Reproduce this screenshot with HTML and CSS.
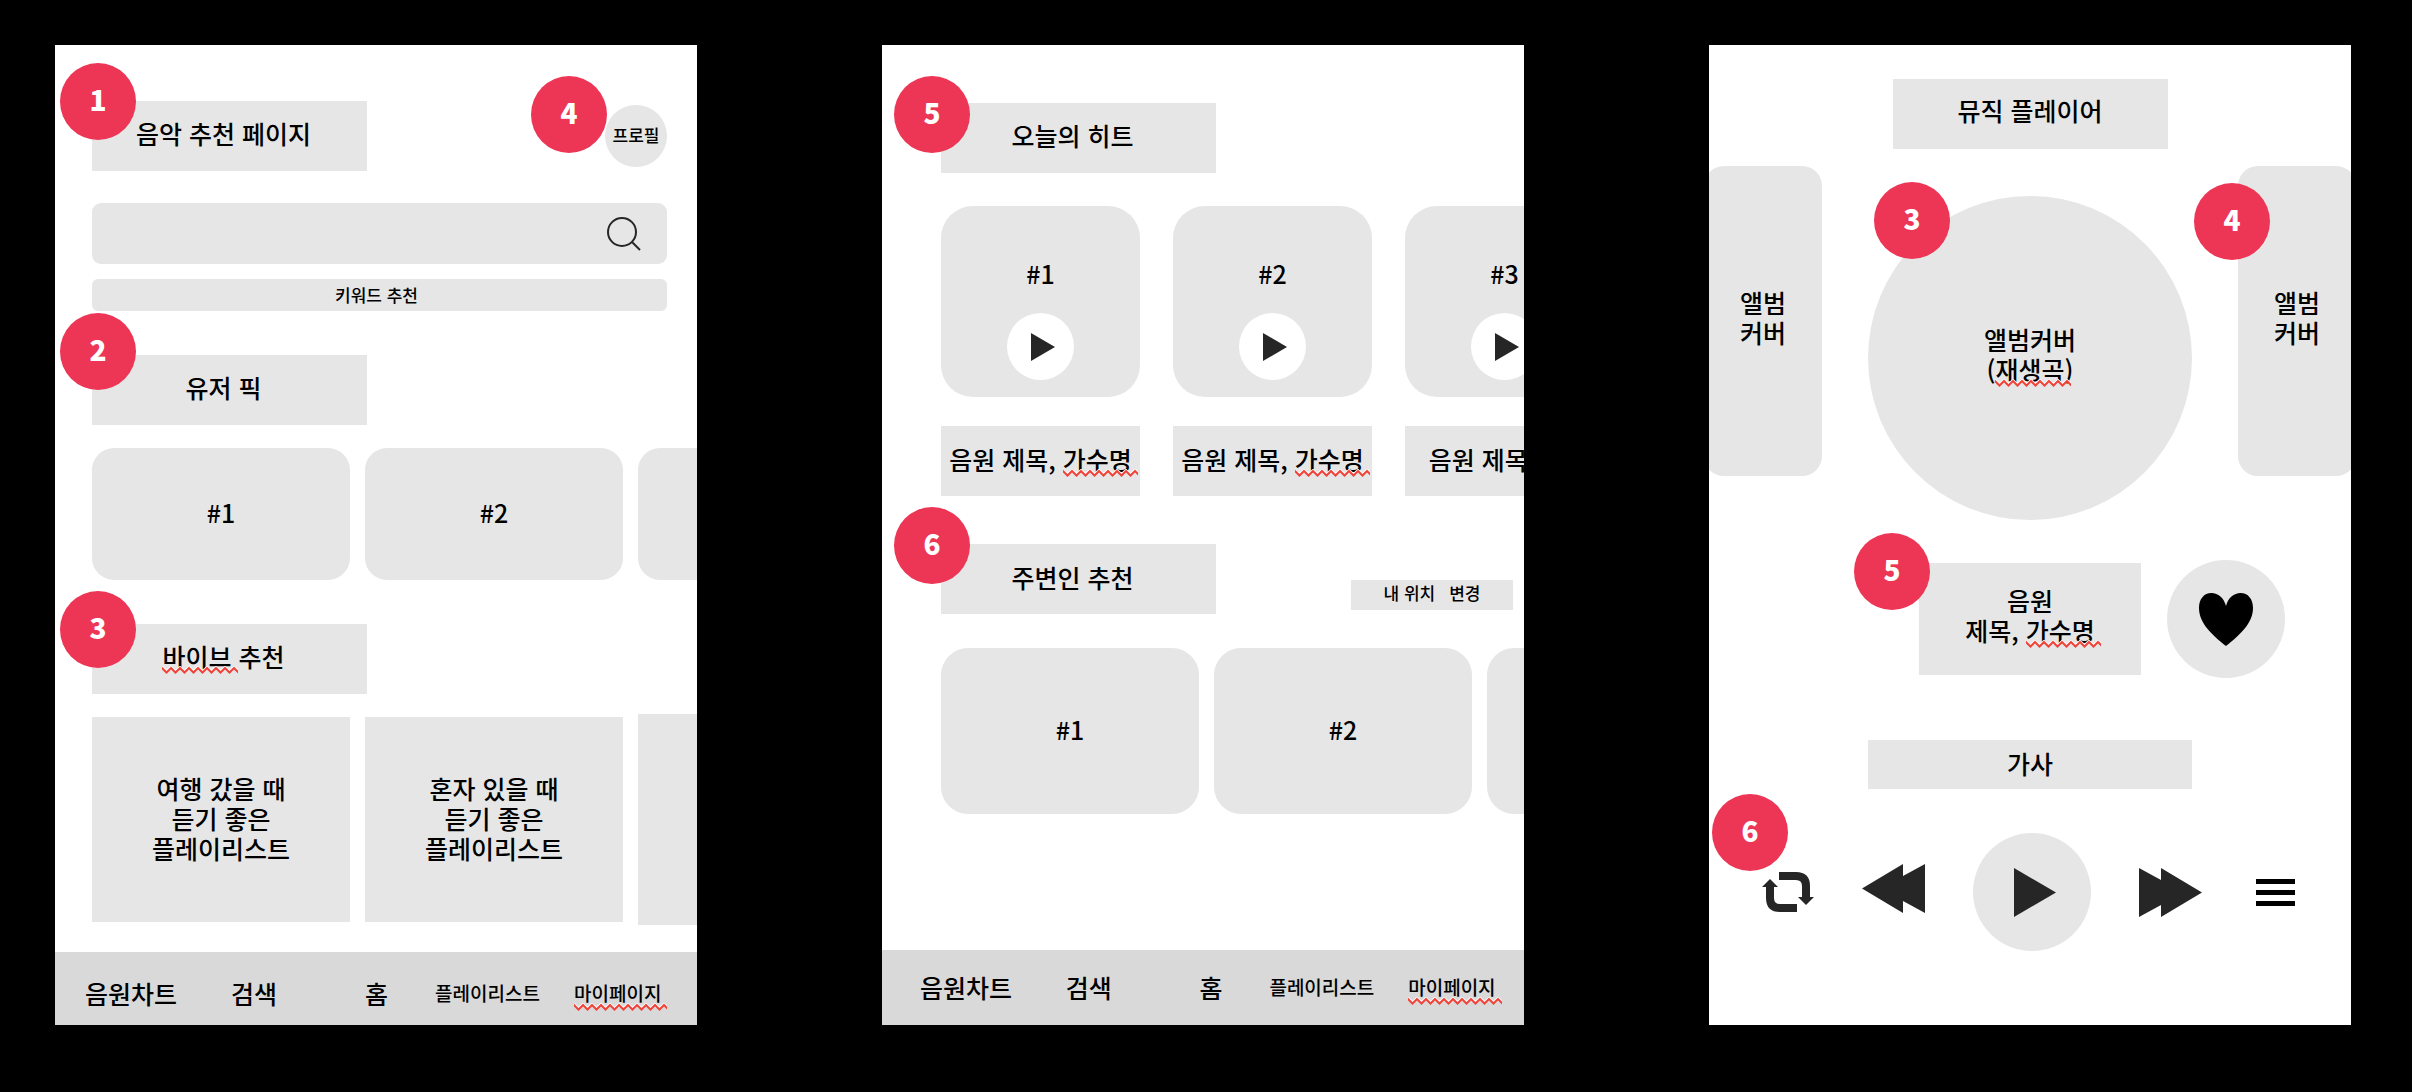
FILE: index.html
```html
<!DOCTYPE html>
<html lang="ko">
<head>
<meta charset="utf-8">
<meta name="viewport" content="width=device-width, initial-scale=1">
<title>음악 추천 와이어프레임</title>
<link rel="stylesheet" href="styles.css">
</head>
<body>
<main class="board">

  <section class="phone phone--recommend">
    <header class="head">
      <h1 class="tag tag--section">음악 추천 페이지<span class="badge badge--title">1</span></h1>
      <div class="profile-wrap">
        <button class="profile" type="button">프로필</button>
        <span class="badge badge--profile">4</span>
      </div>
    </header>

    <form class="search">
      <input class="search__input" type="search" aria-label="검색어">
      <button class="search__button" type="button" aria-label="검색">
        <svg width="34" height="34" viewBox="0 0 34 34" fill="none" stroke="#262626" stroke-width="2"><circle cx="15" cy="15" r="14"/><path d="M25 25l8 8"/></svg>
      </button>
    </form>
    <button class="keyword" type="button">키워드 추천</button>

    <h2 class="tag tag--section">유저 픽<span class="badge badge--pick">2</span></h2>
    <div class="row row--pick">
      <article class="card">#1</article>
      <article class="card">#2</article>
      <article class="card"></article>
    </div>

    <h2 class="tag tag--section"><span><span class="typo">바이브</span> 추천</span><span class="badge badge--vibe">3</span></h2>
    <div class="row row--vibe">
      <article class="card">여행 갔을 때<br>듣기 좋은<br>플레이리스트</article>
      <article class="card">혼자 있을 때<br>듣기 좋은<br>플레이리스트</article>
      <article class="card card--next"></article>
    </div>

    <nav class="tabs tabs--recommend">
      <a href="#chart">음원차트</a>
      <a href="#search">검색</a>
      <a href="#home">홈</a>
      <a class="tabs__small" href="#playlist">플레이리스트</a>
      <a class="tabs__small" href="#mypage"><span class="typo">마이페이지</span></a>
    </nav>
  </section>

  <section class="phone phone--hits">
    <h2 class="tag tag--section">오늘의 히트<span class="badge badge--hits">5</span></h2>
    <div class="songs">
      <article class="song">
        <div class="song__cover">#1
          <button class="song__play" type="button" aria-label="재생"><svg width="24" height="28" viewBox="0 0 24 28" fill="#262626"><path d="M0 0l24 14L0 28z"/></svg></button>
        </div>
        <p class="tag">음원 제목,&nbsp;<span class="typo">가수명</span></p>
      </article>
      <article class="song">
        <div class="song__cover">#2
          <button class="song__play" type="button" aria-label="재생"><svg width="24" height="28" viewBox="0 0 24 28" fill="#262626"><path d="M0 0l24 14L0 28z"/></svg></button>
        </div>
        <p class="tag">음원 제목,&nbsp;<span class="typo">가수명</span></p>
      </article>
      <article class="song song--next">
        <div class="song__cover">#3
          <button class="song__play" type="button" aria-label="재생"><svg width="24" height="28" viewBox="0 0 24 28" fill="#262626"><path d="M0 0l24 14L0 28z"/></svg></button>
        </div>
        <p class="tag">음원 제목,&nbsp;<span class="typo">가수명</span></p>
      </article>
    </div>

    <div class="nearby">
      <h2 class="tag tag--section">주변인 추천<span class="badge badge--nearby">6</span></h2>
      <div class="location"><span>내 위치</span><button type="button">변경</button></div>
    </div>
    <div class="row row--nearby">
      <article class="card">#1</article>
      <article class="card">#2</article>
      <article class="card"></article>
    </div>

    <nav class="tabs tabs--hits">
      <a href="#chart">음원차트</a>
      <a href="#search">검색</a>
      <a href="#home">홈</a>
      <a class="tabs__small" href="#playlist">플레이리스트</a>
      <a class="tabs__small" href="#mypage"><span class="typo">마이페이지</span></a>
    </nav>
  </section>

  <section class="phone phone--player">
    <h2 class="tag tag--player">뮤직 플레이어</h2>

    <div class="carousel">
      <div class="album">앨범<br>커버</div>
      <div class="album album--current"><span>앨범커버<br>(<span class="typo">재생곡</span>)</span><span class="badge badge--current">3</span></div>
      <div class="album">앨범<br>커버<span class="badge badge--album">4</span></div>
    </div>

    <div class="now">
      <div class="now__title"><span>음원<br>제목, <span class="typo">가수명</span></span><span class="badge badge--now">5</span></div>
      <button class="disc" type="button" aria-label="좋아요">
        <svg width="54" height="53" viewBox="0 0 54 53"><path d="M27 13C25 5 19 0 12.500 0 5 0 0 6 0 15 0 30 13 42 27 53 41 42 54 30 54 15 54 6 49 0 41.500 0 35 0 29 5 27 13z"/></svg>
      </button>
    </div>

    <button class="lyrics" type="button">가사</button>

    <div class="controls">
      <span class="badge badge--controls">6</span>
      <button type="button" aria-label="반복">
        <svg width="52" height="40" viewBox="0 0 52 40" fill="#262626"><path d="M17 0h17q14 0 14 14v11h4l-8 8-8-8h4V14q0-6-6-6H17z"/><path d="M35 40H18Q4 40 4 26V15H0l8-8 8 8h-4v11q0 6 6 6h17z"/></svg>
      </button>
      <button type="button" aria-label="이전 곡">
        <svg width="63" height="57" viewBox="0 0 63 57" fill="#262626"><path d="M41 0L0 24.500 41 49V37l22 12V0L41 12z"/></svg>
      </button>
      <button class="disc" type="button" aria-label="재생">
        <svg width="42" height="49" viewBox="0 0 42 49" fill="#262626"><path d="M0 0l42 24.500L0 49z"/></svg>
      </button>
      <button type="button" aria-label="다음 곡">
        <svg width="63" height="49" viewBox="0 0 63 49" fill="#262626"><path d="M22 0l41 24.500L22 49V37L0 49V0l22 12z"/></svg>
      </button>
      <button class="controls__menu" type="button" aria-label="메뉴">
        <svg width="39" height="27" viewBox="0 0 39 27"><path d="M0 0h39v5H0zM0 11h39v5H0zM0 22h39v5H0z"/></svg>
      </button>
    </div>
  </section>

</main>
</body>
</html>
```
FILE: styles.css
```css
:root {
  --block: #e6e6e6;
  --accent: #ed3656;
  --ink: #000;
}

* {
  box-sizing: border-box;
}

body {
  margin: 0;
  background: #000;
  color: var(--ink);
  font: 500 25px/30px "Noto Sans CJK KR", "Noto Sans", sans-serif;
}

h1,
h2,
p {
  margin: 0;
  font-size: 25px;
  font-weight: inherit;
}

a {
  color: inherit;
  text-decoration: none;
}

button {
  padding: 0;
  border: 0;
  background: none;
  color: inherit;
  font: inherit;
  cursor: pointer;
}

svg {
  display: block;
}

.board {
  display: grid;
  grid-template-columns: repeat(3, 1fr);
  gap: 185px;
  min-height: 100vh;
  padding: 45px 61px 67px 55px;
}

.phone {
  display: flex;
  flex-direction: column;
  overflow: hidden;
  min-width: 0;
  background: #fff;
}

.phone--recommend {
  padding-top: 56px;
}

.phone--hits {
  padding-top: 58px;
}

.phone--player {
  padding-top: 34px;
}

/* Grey label blocks */
.tag {
  position: relative;
  display: flex;
  flex: none;
  align-items: center;
  justify-content: center;
  width: 275px;
  height: 70px;
  padding-bottom: 6px;
  background: var(--block);
  white-space: nowrap;
}

.tag--section {
  padding-right: 12px;
}

.phone--recommend > .tag {
  margin: 44px 0 23px 37px;
}

.phone--hits > .tag {
  margin-left: 59px;
}

.tag--player {
  align-self: center;
  padding-bottom: 8px;
}

/* Numbered markers */
.badge {
  position: absolute;
  z-index: 1;
  display: grid;
  place-items: center;
  width: 76px;
  height: 77px;
  padding-bottom: 6px;
  border-radius: 50%;
  background: var(--accent);
  color: #fff;
  font-size: 28px;
  font-weight: 900;
}

.badge--title { left: -32px; top: -38px; }
.badge--profile { left: -74px; top: -29px; }
.badge--pick { left: -32px; top: -42px; }
.badge--vibe { left: -32px; top: -33px; }
.badge--hits { left: -47px; top: -27px; }
.badge--nearby { left: -47px; top: -37px; }
.badge--current { left: 6px; top: -14px; }
.badge--album { left: -44px; top: 17px; }
.badge--now { left: -65px; top: -30px; }
.badge--controls { left: 3px; top: -39px; }

/* Spell-check underline */
.typo {
  position: relative;
  display: inline-block;
}

.typo::after {
  content: "";
  position: absolute;
  right: -6px;
  bottom: -3px;
  left: 0;
  height: 8px;
  background: url("data:image/svg+xml,%3Csvg xmlns='http://www.w3.org/2000/svg' width='9' height='8' fill='none'%3E%3Cpath d='M-1 0L4.500 5 10 0' stroke='%23fff' stroke-width='2'/%3E%3Cpath d='M-2 0L0 2l4.500 4.500L9 2l2-2' stroke='%23f0443a' stroke-width='2'/%3E%3C/svg%3E") 0 0 repeat-x;
}

/* Recommendation screen */
.head {
  display: flex;
  align-items: center;
  justify-content: space-between;
  padding: 0 30px 0 37px;
}

.profile-wrap {
  position: relative;
}

.profile {
  display: block;
  width: 62px;
  height: 62px;
  padding-bottom: 2px;
  border-radius: 50%;
  background: var(--block);
  font-size: 17px;
  white-space: nowrap;
}

.search {
  display: flex;
  align-items: center;
  height: 61px;
  margin: 32px 30px 15px 37px;
  padding-right: 26px;
  border-radius: 9px;
  background: var(--block);
}

.search__input {
  flex: 1;
  min-width: 0;
  height: 100%;
  padding: 0 20px;
  border: 0;
  outline: 0;
  background: none;
  font: inherit;
}

.keyword {
  flex: none;
  height: 32px;
  margin: 0 30px 0 37px;
  padding-right: 6px;
  border-radius: 6px;
  background: var(--block);
  font-size: 17px;
  line-height: 30px;
}

.row {
  display: flex;
  align-items: center;
  gap: 15px;
}

.card {
  display: flex;
  flex: 0 0 258px;
  align-items: center;
  justify-content: center;
  padding-bottom: 4px;
  background: var(--block);
  text-align: center;
}

.row--pick,
.row--vibe {
  padding-left: 37px;
}

.row--pick .card {
  height: 132px;
  border-radius: 22px;
}

.row--vibe .card {
  height: 205px;
}

.row--vibe {
  height: 205px;
}

.row--vibe .card--next {
  height: 211px;
}

.tabs {
  display: grid;
  grid-template-columns: 146fr 134fr 70fr 139fr 123fr;
  align-items: center;
  margin-top: auto;
  background: #d9d9d9;
  white-space: nowrap;
}

.tabs--recommend {
  height: 73px;
  padding: 9px 0 0 30px;
}

.tabs--hits {
  grid-template-columns: 146fr 134fr 70fr 139fr 116fr;
  height: 75px;
  padding: 0 0 2px 38px;
}

.tabs__small {
  font-size: 19px;
}

/* Hits screen */
.songs {
  display: flex;
  gap: 33px;
  margin-top: 33px;
  padding-left: 59px;
}

.song {
  flex: 0 0 199px;
  min-width: 0;
}

.song__cover {
  display: flex;
  flex-direction: column;
  align-items: center;
  justify-content: flex-end;
  gap: 25px;
  height: 191px;
  padding-bottom: 17px;
  border-radius: 32px;
  background: var(--block);
}

.song__play {
  display: grid;
  place-items: center;
  width: 67px;
  height: 67px;
  padding-left: 4px;
  border-radius: 50%;
  background: #fff;
}

.song .tag {
  width: 199px;
  margin-top: 29px;
  padding-bottom: 4px;
}

.song--next .tag {
  width: 230px;
}

.nearby {
  display: flex;
  align-items: flex-end;
  justify-content: space-between;
  margin: 48px 11px 34px 59px;
}

.nearby .tag {
  padding-bottom: 4px;
}

.location {
  display: flex;
  align-items: flex-start;
  justify-content: center;
  gap: 14px;
  width: 162px;
  height: 30px;
  margin-bottom: 4px;
  background: var(--block);
  font-size: 17px;
  line-height: 26px;
}

.row--nearby {
  padding-left: 59px;
}

.row--nearby .card {
  height: 166px;
  border-radius: 27px;
}

/* Player screen */
.carousel {
  display: flex;
  flex: none;
  align-items: flex-start;
  justify-content: space-between;
  margin: 17px -5px 0;
}

.album {
  position: relative;
  display: grid;
  flex: none;
  place-items: center;
  width: 118px;
  height: 310px;
  padding-bottom: 8px;
  border-radius: 20px;
  background: var(--block);
  text-align: center;
}

.album--current {
  width: 324px;
  height: 324px;
  margin-top: 30px;
  border-radius: 50%;
}

.now {
  display: flex;
  align-items: center;
  gap: 26px;
  margin-top: 40px;
  padding-left: 210px;
}

.now__title {
  position: relative;
  display: grid;
  place-items: center;
  width: 222px;
  height: 112px;
  padding-bottom: 8px;
  background: var(--block);
  text-align: center;
}

.disc {
  display: grid;
  place-items: center;
  width: 118px;
  height: 118px;
  border-radius: 50%;
  background: var(--block);
}

.lyrics {
  flex: none;
  align-self: center;
  width: 324px;
  height: 49px;
  margin-top: 62px;
  padding-bottom: 4px;
  background: var(--block);
}

.controls {
  position: relative;
  display: flex;
  align-items: center;
  gap: 48px;
  margin-top: 44px;
  padding: 0 56px 0 53px;
}

.controls .disc {
  padding-left: 6px;
}

.controls__menu {
  margin-left: auto;
}
```
